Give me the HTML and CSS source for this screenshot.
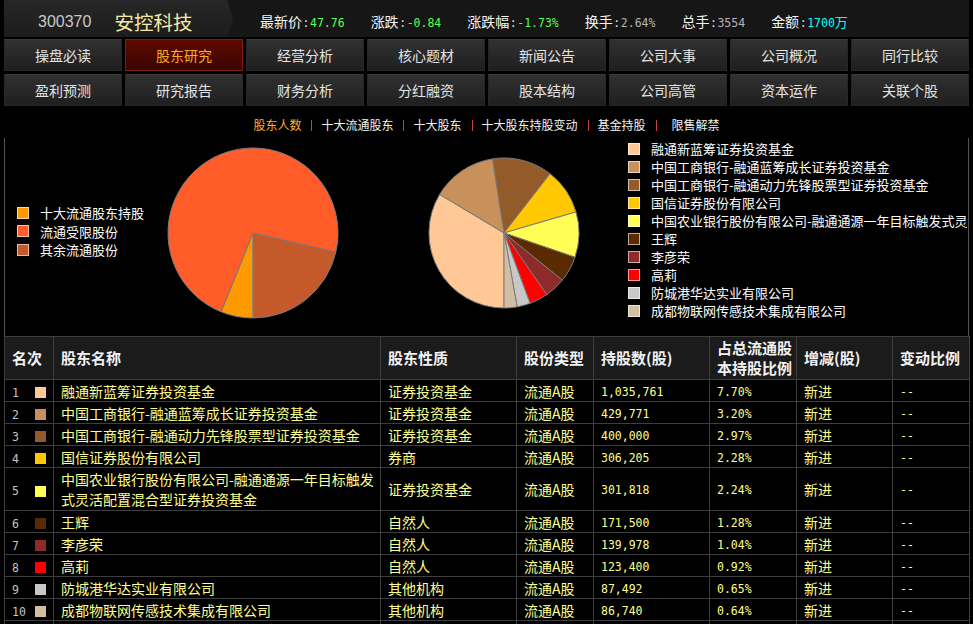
FILE: index.html
```html
<!DOCTYPE html>
<html lang="zh-CN">
<head>
<meta charset="utf-8">
<title>安控科技 股东研究</title>
<link rel="stylesheet" href="styles.css">
</head>
<body>
<div class="page">
  <header class="quote">
    <div class="stock">
      <span class="code">300370</span>
      <span class="name">安控科技</span>
    </div>
    <ul class="stats">
      <li><span class="lbl">最新价</span><span class="colon">:</span><span class="val green">47.76</span></li>
      <li><span class="lbl">涨跌</span><span class="colon">:</span><span class="val green">-0.84</span></li>
      <li><span class="lbl">涨跌幅</span><span class="colon">:</span><span class="val green">-1.73%</span></li>
      <li><span class="lbl">换手</span><span class="colon">:</span><span class="val gray">2.64%</span></li>
      <li><span class="lbl">总手</span><span class="colon">:</span><span class="val gray">3554</span></li>
      <li><span class="lbl">金额</span><span class="colon">:</span><span class="val cyan">1700<span class="wan">万</span></span></li>
    </ul>
  </header>

  <nav class="tabs">
    <a class="tab">操盘必读</a>
    <a class="tab active">股东研究</a>
    <a class="tab">经营分析</a>
    <a class="tab">核心题材</a>
    <a class="tab">新闻公告</a>
    <a class="tab">公司大事</a>
    <a class="tab">公司概况</a>
    <a class="tab">同行比较</a>
    <a class="tab">盈利预测</a>
    <a class="tab">研究报告</a>
    <a class="tab">财务分析</a>
    <a class="tab">分红融资</a>
    <a class="tab">股本结构</a>
    <a class="tab">公司高管</a>
    <a class="tab">资本运作</a>
    <a class="tab">关联个股</a>
  </nav>

  <div class="subnav">
    <a class="sub current">股东人数</a><i class="sep"></i>
    <a class="sub">十大流通股东</a><i class="sep"></i>
    <a class="sub">十大股东</a><i class="sep"></i>
    <a class="sub">十大股东持股变动</a><i class="sep"></i>
    <a class="sub">基金持股</a><i class="sep"></i>
    <a class="sub last">限售解禁</a>
  </div>

  <section class="charts">
    <ul class="legend legend-left">
      <li><i class="box l1"></i>十大流通股东持股</li>
      <li><i class="box l2"></i>流通受限股份</li>
      <li><i class="box l3"></i>其余流通股份</li>
    </ul>
    <svg class="pie pie-left" width="172" height="172" viewBox="0 0 172 172">
      <path class="l1" d="M86 86 L86 171 A85 85 0 0 1 54.16 164.81 Z"/>
      <path class="l2" d="M86 86 L54.16 164.81 A85 85 0 1 1 168.82 105.12 Z"/>
      <path class="l3" d="M86 86 L168.82 105.12 A85 85 0 0 1 86 171 Z"/>
    </svg>
    <svg class="pie pie-right" width="152" height="152" viewBox="0 0 152 152">
      <path class="c1" d="M76 76 L76 151 A75 75 0 0 1 11.67 37.44 Z"/>
      <path class="c2" d="M76 76 L11.67 37.44 A75 75 0 0 1 64.52 1.88 Z"/>
      <path class="c3" d="M76 76 L64.52 1.88 A75 75 0 0 1 122.02 16.78 Z"/>
      <path class="c4" d="M76 76 L122.02 16.78 A75 75 0 0 1 147.97 54.90 Z"/>
      <path class="c5" d="M76 76 L147.97 54.90 A75 75 0 0 1 146.98 100.22 Z"/>
      <path class="c6" d="M76 76 L146.98 100.22 A75 75 0 0 1 134.34 123.14 Z"/>
      <path class="c7" d="M76 76 L134.34 123.14 A75 75 0 0 1 118.72 137.64 Z"/>
      <path class="c8" d="M76 76 L118.72 137.64 A75 75 0 0 1 101.99 146.36 Z"/>
      <path class="c9" d="M76 76 L101.99 146.36 A75 75 0 0 1 89.10 149.85 Z"/>
      <path class="c10" d="M76 76 L89.10 149.85 A75 75 0 0 1 76 151 Z"/>
    </svg>
    <ul class="legend legend-right">
      <li><i class="box c1"></i>融通新蓝筹证券投资基金</li>
      <li><i class="box c2"></i>中国工商银行-融通蓝筹成长证券投资基金</li>
      <li><i class="box c3"></i>中国工商银行-融通动力先锋股票型证券投资基金</li>
      <li><i class="box c4"></i>国信证券股份有限公司</li>
      <li><i class="box c5"></i>中国农业银行股份有限公司-融通通源一年目标触发式灵活配置混合型证券投资基金</li>
      <li><i class="box c6"></i>王辉</li>
      <li><i class="box c7"></i>李彦荣</li>
      <li><i class="box c8"></i>高莉</li>
      <li><i class="box c9"></i>防城港华达实业有限公司</li>
      <li><i class="box c10"></i>成都物联网传感技术集成有限公司</li>
    </ul>
  </section>

  <table class="holders">
    <colgroup>
      <col class="w-rank"><col class="w-name"><col class="w-kind"><col class="w-type">
      <col class="w-num"><col class="w-pct"><col class="w-chg"><col class="w-ratio">
    </colgroup>
    <thead>
      <tr>
        <th>名次</th>
        <th>股东名称</th>
        <th>股东性质</th>
        <th>股份类型</th>
        <th>持股数(股)</th>
        <th>占总流通股<br>本持股比例</th>
        <th>增减(股)</th>
        <th>变动比例</th>
      </tr>
    </thead>
    <tbody>
      <tr>
        <td><span class="rk">1</span><i class="sw c1"></i></td>
        <td>融通新蓝筹证券投资基金</td><td>证券投资基金</td><td>流通A股</td>
        <td class="num">1,035,761</td><td class="num">7.70%</td><td>新进</td><td class="num">--</td>
      </tr>
      <tr>
        <td><span class="rk">2</span><i class="sw c2"></i></td>
        <td>中国工商银行-融通蓝筹成长证券投资基金</td><td>证券投资基金</td><td>流通A股</td>
        <td class="num">429,771</td><td class="num">3.20%</td><td>新进</td><td class="num">--</td>
      </tr>
      <tr>
        <td><span class="rk">3</span><i class="sw c3"></i></td>
        <td>中国工商银行-融通动力先锋股票型证券投资基金</td><td>证券投资基金</td><td>流通A股</td>
        <td class="num">400,000</td><td class="num">2.97%</td><td>新进</td><td class="num">--</td>
      </tr>
      <tr>
        <td><span class="rk">4</span><i class="sw c4"></i></td>
        <td>国信证券股份有限公司</td><td>券商</td><td>流通A股</td>
        <td class="num">306,205</td><td class="num">2.28%</td><td>新进</td><td class="num">--</td>
      </tr>
      <tr class="tall">
        <td><span class="rk">5</span><i class="sw c5"></i></td>
        <td class="two">中国农业银行股份有限公司-融通通源一年目标触发<br>式灵活配置混合型证券投资基金</td><td>证券投资基金</td><td>流通A股</td>
        <td class="num">301,818</td><td class="num">2.24%</td><td>新进</td><td class="num">--</td>
      </tr>
      <tr>
        <td><span class="rk">6</span><i class="sw c6"></i></td>
        <td>王辉</td><td>自然人</td><td>流通A股</td>
        <td class="num">171,500</td><td class="num">1.28%</td><td>新进</td><td class="num">--</td>
      </tr>
      <tr>
        <td><span class="rk">7</span><i class="sw c7"></i></td>
        <td>李彦荣</td><td>自然人</td><td>流通A股</td>
        <td class="num">139,978</td><td class="num">1.04%</td><td>新进</td><td class="num">--</td>
      </tr>
      <tr>
        <td><span class="rk">8</span><i class="sw c8"></i></td>
        <td>高莉</td><td>自然人</td><td>流通A股</td>
        <td class="num">123,400</td><td class="num">0.92%</td><td>新进</td><td class="num">--</td>
      </tr>
      <tr>
        <td><span class="rk">9</span><i class="sw c9"></i></td>
        <td>防城港华达实业有限公司</td><td>其他机构</td><td>流通A股</td>
        <td class="num">87,492</td><td class="num">0.65%</td><td>新进</td><td class="num">--</td>
      </tr>
      <tr>
        <td><span class="rk">10</span><i class="sw c10"></i></td>
        <td>成都物联网传感技术集成有限公司</td><td>其他机构</td><td>流通A股</td>
        <td class="num">86,740</td><td class="num">0.64%</td><td>新进</td><td class="num">--</td>
      </tr>
      <tr>
        <td></td><td></td><td></td><td></td><td></td><td></td><td></td><td></td>
      </tr>
    </tbody>
  </table>
</div>
</body>
</html>
```

FILE: styles.css
```css
* { box-sizing: border-box; }

html, body {
  margin: 0;
  padding: 0;
  background: #000;
  height: 624px;
  overflow: hidden;
}

body {
  font-family: "Noto Sans CJK SC", "Liberation Sans", sans-serif;
  color: #fff;
}

.page {
  width: 965px;
  margin-left: 4px;
}

/* ---------- quote header ---------- */
.quote {
  height: 37px;
  background: #161616;
  display: flex;
  align-items: stretch;
}

.stock {
  width: 229px;
  display: flex;
  align-items: center;
  padding: 6px 0 0 34px;
  background: linear-gradient(#272727, #1c1c1c);
  clip-path: polygon(0 0, 223px 0, 229px 50%, 223px 100%, 0 100%);
}

.code {
  font-family: "Liberation Sans", sans-serif;
  font-size: 16px;
  color: #c8c8c8;
  line-height: 1;
}

.name {
  margin-left: 23px;
  font-size: 19.5px;
  line-height: 1;
  color: #f2eaa8;
}

.stats {
  display: flex;
  align-items: center;
  gap: 26px;
  list-style: none;
  margin: 0 0 0 27px;
  padding: 6px 0 0 0;
}

.stats li {
  display: flex;
  align-items: baseline;
  line-height: 1;
}

.lbl {
  font-size: 14px;
  color: #f4f4f4;
}

.colon {
  font-family: "DejaVu Sans Mono", monospace;
  font-size: 11.5px;
  color: #e0e0e0;
  width: 8px;
  text-align: center;
}

.val {
  font-family: "DejaVu Sans Mono", monospace;
  font-size: 11.5px;
}

.wan {
  font-family: "Noto Sans CJK SC", sans-serif;
  font-size: 13px;
}

.green { color: #55ff55; }
.gray { color: #b4b4b4; }
.cyan { color: #00ffff; }

/* ---------- tabs ---------- */
.tabs {
  display: grid;
  grid-template-columns: repeat(8, 118px);
  grid-auto-rows: 32px;
  gap: 3px;
  margin-top: 2px;
}

.tab {
  display: flex;
  align-items: center;
  justify-content: center;
  font-size: 14px;
  color: #e4e4e4;
  background: linear-gradient(#313131, #1f1f1f);
  border: 1px solid #262626;
  border-top-color: #3a3a3a;
}

.tab.active {
  background: linear-gradient(#5e0a00, #3a0400);
  border-color: #7c1e0e;
  color: #ffaa1e;
}

/* ---------- sub navigation ---------- */
.subnav {
  height: 32px;
  padding-top: 6px;
  display: flex;
  align-items: center;
  justify-content: center;
  font-size: 12px;
  line-height: 14px;
}

.sub { color: #f2f2f2; }
.sub.current { color: #ffb020; }
.sub.last { padding-left: 6px; }

.sep {
  display: inline-block;
  width: 1px;
  height: 11px;
  margin: 0 9px 0 10px;
  background: #c84040;
}

/* ---------- charts ---------- */
.charts {
  height: 198px;
  display: flex;
  align-items: flex-start;
  border-left: 1px solid #555;
  border-right: 1px solid #555;
  overflow: hidden;
}

.legend {
  list-style: none;
  margin: 0;
  padding: 0;
  font-size: 13px;
  color: #fff;
  flex-shrink: 0;
}

.legend li {
  display: flex;
  align-items: center;
  white-space: nowrap;
}

.legend-left {
  width: 150px;
  margin: 65.4px 0 0 12px;
}
.legend-left li { height: 18.5px; }

.legend-right {
  margin: 1.7px 0 0 48px;
}
.legend-right li { height: 18px; }

.box {
  width: 12px;
  height: 12px;
  margin-right: 11px;
  border: 1px solid rgba(255, 255, 255, 0.6);
  flex-shrink: 0;
}

.pie {
  display: block;
  flex-shrink: 0;
}

.pie path {
  stroke: #7c7c7c;
  stroke-width: 1;
  stroke-linejoin: round;
}

.pie-left { margin-top: 9.3px; }
.pie-right { margin: 19.3px 0 0 89px; }

/* colours (pie slices, legend boxes, table swatches) */
.l1 { fill: #ff9900; background: #ff9900; }
.l2 { fill: #ff5c2a; background: #ff5c2a; }
.l3 { fill: #c45a2a; background: #c45a2a; }

.c1 { fill: #ffc896; background: #ffc896; }
.c2 { fill: #c8915c; background: #c8915c; }
.c3 { fill: #935b2a; background: #935b2a; }
.c4 { fill: #ffc800; background: #ffc800; }
.c5 { fill: #ffff55; background: #ffff55; }
.c6 { fill: #5a2a00; background: #5a2a00; }
.c7 { fill: #8e2a2a; background: #8e2a2a; }
.c8 { fill: #ff0000; background: #ff0000; }
.c9 { fill: #c8c8c8; background: #c8c8c8; }
.c10 { fill: #d2bea2; background: #d2bea2; }

/* ---------- table ---------- */
.holders {
  width: 965px;
  border-collapse: collapse;
  table-layout: fixed;
  font-size: 14px;
  color: #ffff8c;
}

.w-rank { width: 49px; }
.w-name { width: 327px; }
.w-kind { width: 136px; }
.w-type { width: 77px; }
.w-num { width: 116px; }
.w-pct { width: 87px; }
.w-chg { width: 96px; }
.w-ratio { width: 77px; }

.holders th,
.holders td {
  border: 1px solid #3e3e3e;
  padding: 0 2px 0 7px;
  text-align: left;
  white-space: nowrap;
  overflow: hidden;
  vertical-align: middle;
}

.holders th {
  height: 43px;
  background: #1b1b1b;
  color: #f2f2f2;
  font-size: 15px;
  font-weight: bold;
  line-height: 20px;
}

.holders td {
  height: 22px;
  line-height: 16px;
}

.holders tr.tall td { height: 43px; }
.holders td.two { line-height: 20px; }

.holders td.num {
  font-family: "DejaVu Sans Mono", monospace;
  font-size: 11.5px;
  padding-top: 2px;
}

.rk {
  display: inline-block;
  width: 23px;
  font-family: "DejaVu Sans Mono", monospace;
  font-size: 11.5px;
  line-height: 12px;
  color: #c4c4c4;
  vertical-align: middle;
}

.sw {
  display: inline-block;
  width: 11px;
  height: 11px;
  vertical-align: middle;
}
```
